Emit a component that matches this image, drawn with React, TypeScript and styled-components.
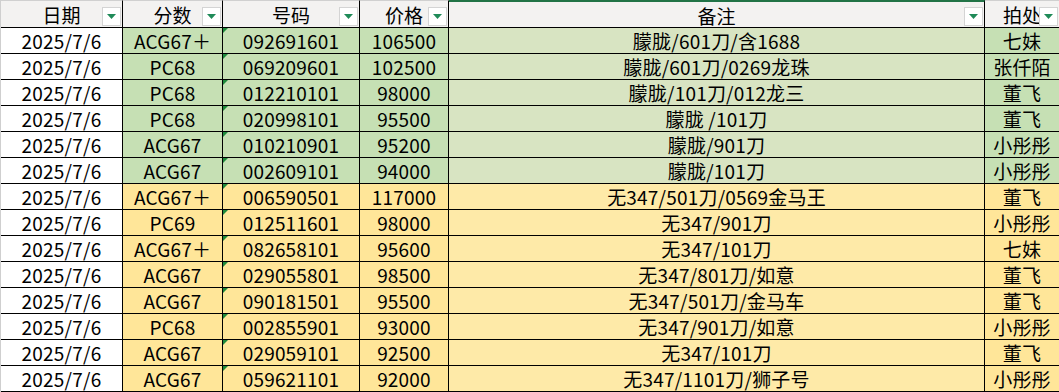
import React from 'react';
import styled, { createGlobalStyle } from 'styled-components';

type Tone = 'green' | 'yellow';

type Row = {
  date: string;
  score: string;
  code: string;
  price: string;
  note: string;
  seller: string;
  tone: Tone;
};

const rows: Row[] = [
  { date: '2025/7/6', score: 'ACG67＋', code: '092691601', price: '106500', note: '朦胧/601刀/含1688', seller: '七妹', tone: 'green' },
  { date: '2025/7/6', score: 'PC68', code: '069209601', price: '102500', note: '朦胧/601刀/0269龙珠', seller: '张仟陌', tone: 'green' },
  { date: '2025/7/6', score: 'PC68', code: '012210101', price: '98000', note: '朦胧/101刀/012龙三', seller: '董飞', tone: 'green' },
  { date: '2025/7/6', score: 'PC68', code: '020998101', price: '95500', note: '朦胧 /101刀', seller: '董飞', tone: 'green' },
  { date: '2025/7/6', score: 'ACG67', code: '010210901', price: '95200', note: '朦胧/901刀', seller: '小彤彤', tone: 'green' },
  { date: '2025/7/6', score: 'ACG67', code: '002609101', price: '94000', note: '朦胧/101刀', seller: '小彤彤', tone: 'green' },
  { date: '2025/7/6', score: 'ACG67＋', code: '006590501', price: '117000', note: '无347/501刀/0569金马王', seller: '董飞', tone: 'yellow' },
  { date: '2025/7/6', score: 'PC69', code: '012511601', price: '98000', note: '无347/901刀', seller: '小彤彤', tone: 'yellow' },
  { date: '2025/7/6', score: 'ACG67＋', code: '082658101', price: '95600', note: '无347/101刀', seller: '七妹', tone: 'yellow' },
  { date: '2025/7/6', score: 'ACG67', code: '029055801', price: '98500', note: '无347/801刀/如意', seller: '董飞', tone: 'yellow' },
  { date: '2025/7/6', score: 'ACG67', code: '090181501', price: '95500', note: '无347/501刀/金马车', seller: '董飞', tone: 'yellow' },
  { date: '2025/7/6', score: 'PC68', code: '002855901', price: '93000', note: '无347/901刀/如意', seller: '小彤彤', tone: 'yellow' },
  { date: '2025/7/6', score: 'ACG67', code: '029059101', price: '92500', note: '无347/101刀', seller: '董飞', tone: 'yellow' },
  { date: '2025/7/6', score: 'ACG67', code: '059621101', price: '92000', note: '无347/1101刀/狮子号', seller: '小彤彤', tone: 'yellow' },
];

const headers = ['日期', '分数', '号码', '价格', '备注', '拍处'];

const fills = {
  green: { strong: '#c6e0b4', light: '#d8e4c2' },
  yellow: { strong: '#ffe699', light: '#feeaa8' },
};

const GlobalStyle = createGlobalStyle`
  html, body {
    margin: 0;
    padding: 0;
    background: #ffffff;
    overflow: hidden;
  }
  body {
    font-family: "Noto Sans CJK SC", "Noto Sans", sans-serif;
    color: #000;
  }
`;

export default function App() {
  return (
    <>
      <GlobalStyle />
      <Sheet>
        {headers.map((h, i) => (
          <HeadCell key={h} selected={i === 4}>
            {h}
            <FilterButton>
              <svg width="9" height="5" viewBox="0 0 9 5">
                <path d="M0 0 H9 L4.5 5 Z" fill="#1f8a58" />
              </svg>
            </FilterButton>
          </HeadCell>
        ))}
        {rows.map((r, idx) => (
          <React.Fragment key={idx}>
            <Cell>{r.date}</Cell>
            <Cell fill={fills[r.tone].strong}>{r.score}</Cell>
            <Cell fill={fills[r.tone].strong} flagged>{r.code}</Cell>
            <Cell fill={fills[r.tone].strong}>{r.price}</Cell>
            <Cell fill={fills[r.tone].light}>{r.note}</Cell>
            <Cell fill={fills[r.tone].strong}>{r.seller}</Cell>
          </React.Fragment>
        ))}
      </Sheet>
    </>
  );
}

const Sheet = styled.div`
  display: grid;
  grid-template-columns: 122px 100px 137px 89px 536px 75px;
  grid-template-rows: 28px;
  grid-auto-rows: 26px;
  width: 1059px;
  border-left: 1px solid #cfcfcf;
  box-sizing: border-box;
`;

const HeadCell = styled.div<{ selected?: boolean }>`
  position: relative;
  display: flex;
  align-items: center;
  justify-content: center;
  box-sizing: border-box;
  background: #f3f2f1;
  border-top: ${p => (p.selected ? '2px solid #217346' : '1px solid #d0d0d0')};
  border-right: 1px solid #000;
  border-bottom: 1px solid #000;
  font-size: 19px;
  padding-top: 1px;
  white-space: nowrap;

  &:last-of-type {
    border-right: none;
  }
`;

const FilterButton = styled.span`
  position: absolute;
  right: 1px;
  bottom: 1px;
  width: 19px;
  height: 19px;
  box-sizing: border-box;
  background: #fff;
  border: 1px solid #d4d4d4;
  display: flex;
  align-items: center;
  justify-content: center;
`;

const Cell = styled.div<{ fill?: string; flagged?: boolean }>`
  position: relative;
  display: flex;
  align-items: center;
  justify-content: center;
  box-sizing: border-box;
  background: ${p => p.fill || '#ffffff'};
  border-right: 1px solid #000;
  border-bottom: 1px solid #000;
  font-size: 19px;
  letter-spacing: 0.2px;
  white-space: nowrap;
  overflow: hidden;

  &::before {
    content: '';
    display: ${p => (p.flagged ? 'block' : 'none')};
    position: absolute;
    left: 0;
    top: 0;
    border-top: 5px solid #1e8a3c;
    border-right: 5px solid transparent;
  }
`;
